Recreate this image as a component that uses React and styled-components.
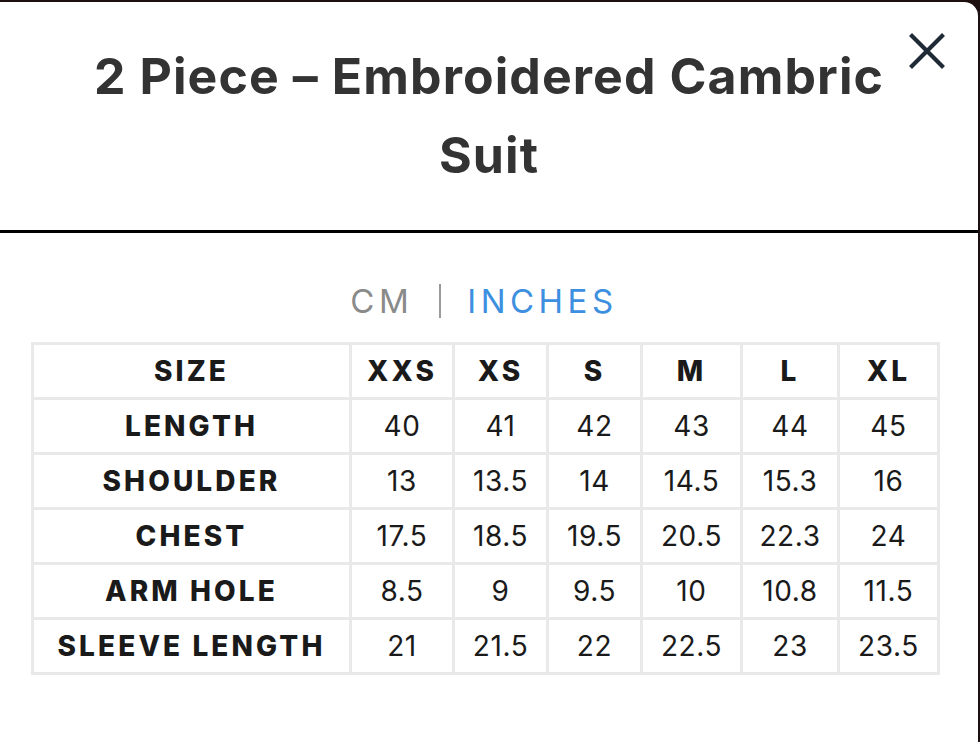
import React, { useState } from 'react'
import styled, { createGlobalStyle } from 'styled-components'

const GlobalStyle = createGlobalStyle`
  html, body {
    margin: 0;
    padding: 0;
    background: #1d0f10;
  }
  #root {
    height: 742px;
  }
`

const Card = styled.div`
  height: 740px;
  margin: 2px 2px 0 0;
  background: #fff;
  border-top-right-radius: 14px;
  font-family: Inter, 'Open Sans', sans-serif;
  overflow: hidden;
`

const Header = styled.header`
  position: relative;
  height: 228px;
  border-bottom: 3px solid #000;
  display: flex;
  align-items: center;
  justify-content: center;
`

const Title = styled.h1`
  margin: 0;
  max-width: 810px;
  text-align: center;
  font-size: 50px;
  line-height: 79px;
  font-weight: 700;
  color: #333;
  letter-spacing: 1.1px;
`

const CloseButton = styled.button`
  position: absolute;
  top: 28px;
  right: 30px;
  width: 42px;
  height: 42px;
  padding: 0;
  border: 0;
  background: none;
  cursor: pointer;
  display: flex;
  align-items: center;
  justify-content: center;
`

const Body = styled.main`
  padding: 50px 0 0 31px;
  width: 906px;
`

const Units = styled.div`
  display: flex;
  justify-content: center;
  align-items: center;
  gap: 26px;
  height: 36px;
  margin-bottom: 23px;
`

const Unit = styled.button`
  border: 0;
  background: none;
  padding: 0;
  font-family: inherit;
  font-size: 33px;
  font-weight: 400;
  letter-spacing: 4.5px;
  color: ${p => (p.active ? '#3d8fe0' : '#8a8a8a')};
  cursor: pointer;
`

const Divider = styled.span`
  width: 2px;
  height: 34px;
  background: #9a9a9a;
`

const Table = styled.table`
  width: 906px;
  border-collapse: collapse;
  table-layout: fixed;
  border: 3px solid #e9e9e9;
`

const Cell = styled.td`
  height: 52px;
  padding: 0;
  border: 3px solid #e9e9e9;
  text-align: center;
  font-size: 28px;
  color: #1a1a1a;
  font-weight: ${p => (p.bold ? 800 : 400)};
  letter-spacing: ${p => (p.bold ? '3.1px' : '0.6px')};
`

const widths = [318, 103, 94, 94, 100, 97, 100]

const rows = {
  cm: [
    ['SIZE', 'XXS', 'XS', 'S', 'M', 'L', 'XL'],
    ['LENGTH', '102', '104', '107', '109', '112', '114'],
    ['SHOULDER', '33', '34', '36', '37', '39', '41'],
    ['CHEST', '44', '47', '50', '52', '57', '61'],
    ['ARM HOLE', '22', '23', '24', '25', '27', '29'],
    ['SLEEVE LENGTH', '53', '55', '56', '57', '58', '60'],
  ],
  in: [
    ['SIZE', 'XXS', 'XS', 'S', 'M', 'L', 'XL'],
    ['LENGTH', '40', '41', '42', '43', '44', '45'],
    ['SHOULDER', '13', '13.5', '14', '14.5', '15.3', '16'],
    ['CHEST', '17.5', '18.5', '19.5', '20.5', '22.3', '24'],
    ['ARM HOLE', '8.5', '9', '9.5', '10', '10.8', '11.5'],
    ['SLEEVE LENGTH', '21', '21.5', '22', '22.5', '23', '23.5'],
  ],
}

export default function App() {
  const [unit, setUnit] = useState('in')

  return (
    <>
      <GlobalStyle />
      <Card>
        <Header>
          <Title>2 Piece – Embroidered Cambric Suit</Title>
          <CloseButton aria-label="Close">
            <svg width="36" height="36" viewBox="0 0 36 36">
              <path d="M3 3L33 33M33 3L3 33" stroke="#1f2a37" strokeWidth="4.2" strokeLinecap="square" />
            </svg>
          </CloseButton>
        </Header>
        <Body>
          <Units>
            <Unit active={unit === 'cm'} onClick={() => setUnit('cm')}>CM</Unit>
            <Divider />
            <Unit active={unit === 'in'} onClick={() => setUnit('in')}>INCHES</Unit>
          </Units>
          <Table>
            <colgroup>
              {widths.map((w, i) => (
                <col key={i} style={{ width: w }} />
              ))}
            </colgroup>
            <tbody>
              {rows[unit].map((row, r) => (
                <tr key={r}>
                  {row.map((v, c) => (
                    <Cell key={c} bold={r === 0 || c === 0}>
                      {v}
                    </Cell>
                  ))}
                </tr>
              ))}
            </tbody>
          </Table>
        </Body>
      </Card>
    </>
  )
}
